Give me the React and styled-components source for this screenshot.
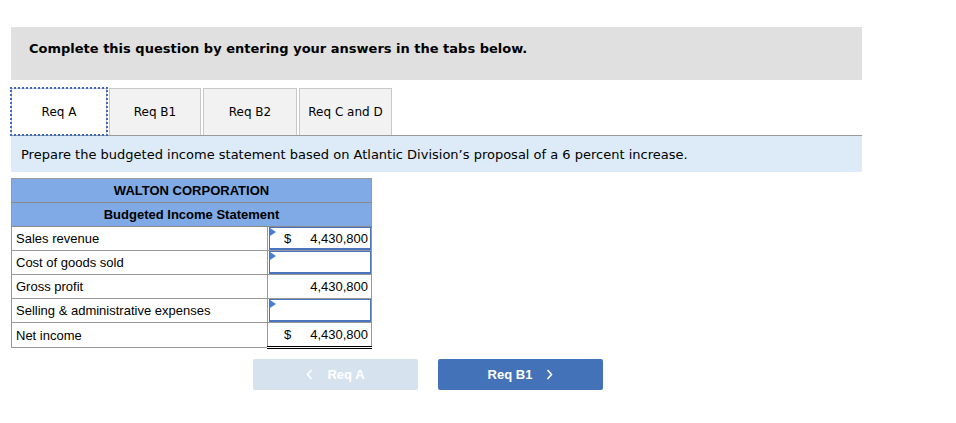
import React from "react";
import styled, { createGlobalStyle } from "styled-components";

const GlobalStyle = createGlobalStyle`
  body {
    margin: 0;
    background: #ffffff;
    font-family: "DejaVu Sans", Verdana, sans-serif;
  }
`;

const Page = styled.div`
  width: 851px;
  padding: 27px 0 0 11px;
`;

const Banner = styled.div`
  box-sizing: border-box;
  height: 53px;
  background: #e0e0e0;
  padding: 14px 0 0 18px;
  font-size: 13px;
  font-weight: bold;
  color: #000;
`;

const TabRow = styled.div`
  display: flex;
  gap: 2px;
  margin-top: 8px;
  height: 47px;
`;

const Tab = styled.div`
  box-sizing: border-box;
  width: ${(p) => p.w}px;
  height: 47px;
  display: flex;
  align-items: center;
  justify-content: center;
  font-size: 12px;
  color: #000;
  background: ${(p) => (p.active ? "#ffffff" : "#f2f2f2")};
  border: 1px solid #c8c8c8;
  border-bottom: none;
  outline: ${(p) => (p.active ? "2px dotted #3d6cc0" : "none")};
  outline-offset: -1px;
  position: relative;
  z-index: ${(p) => (p.active ? 1 : 0)};
`;

const Instruction = styled.div`
  box-sizing: border-box;
  height: 37px;
  background: #dcebf7;
  border-top: 1px solid #9a9a9a;
  display: flex;
  align-items: center;
  padding-left: 10px;
  font-size: 13px;
  color: #000;
`;

const Statement = styled.table`
  margin-top: 6px;
  width: 360px;
  table-layout: fixed;
  border-collapse: collapse;
  font-family: "Liberation Sans", Arial, sans-serif;
  font-size: 13px;
  color: #000;
  border: 1px solid #999;
`;

const HeadCell = styled.th`
  height: 23px;
  padding: 0;
  background: #7faae5;
  font-weight: bold;
  text-align: center;
  border-bottom: 1px solid #888;
`;

const Label = styled.td`
  height: 23px;
  padding: 0 0 0 4px;
  border: 1px solid #999;
  white-space: nowrap;
`;

const ValueCell = styled.td`
  padding: 0;
  border: 1px solid #999;
  border-left: 1px solid #666;
  ${(p) => p.total && "border-top: 1px solid #333; border-bottom: 3px double #000;"}
`;

const Amount = styled.div`
  box-sizing: border-box;
  position: relative;
  height: 23px;
  margin: 0 0 0 1px;
  display: flex;
  align-items: center;
  justify-content: space-between;
  padding: 0 2px 0 14px;
  border: ${(p) => (p.input ? "1px solid #4b74bf" : "1px solid transparent")};
  ${(p) => p.input && "border-bottom-width: 2px;"}
`;

const Marker = styled.span`
  position: absolute;
  top: 0;
  left: 0;
  width: 0;
  height: 0;
  border-top: 4px solid transparent;
  border-bottom: 4px solid transparent;
  border-left: 6px solid #4a7dd6;
`;

const Nav = styled.div`
  display: flex;
  gap: 20px;
  margin: 10px 0 0 242px;
`;

const NavButton = styled.div`
  width: 165px;
  height: 31px;
  border-radius: 2px;
  background: ${(p) => (p.disabled ? "#d6e3ef" : "#4472b8")};
  color: #fff;
  font-family: "Liberation Sans", Arial, sans-serif;
  font-size: 13px;
  font-weight: bold;
  display: flex;
  align-items: center;
  justify-content: center;
  gap: 14px;
`;

const Chevron = ({ dir }) => (
  <svg width="7" height="11" viewBox="0 0 7 11">
    <path
      d={dir === "left" ? "M5.5 1 L1.5 5.5 L5.5 10" : "M1.5 1 L5.5 5.5 L1.5 10"}
      fill="none"
      stroke="#fff"
      strokeWidth="1.6"
    />
  </svg>
);

const rows = [
  { label: "Sales revenue", input: true, dollar: true, value: "4,430,800" },
  { label: "Cost of goods sold", input: true },
  { label: "Gross profit", value: "4,430,800" },
  { label: "Selling & administrative expenses", input: true },
  { label: "Net income", dollar: true, value: "4,430,800", total: true },
];

export default function App() {
  return (
    <Page>
      <GlobalStyle />
      <Banner>Complete this question by entering your answers in the tabs below.</Banner>
      <TabRow>
        <Tab w={96} active>Req A</Tab>
        <Tab w={92}>Req B1</Tab>
        <Tab w={94}>Req B2</Tab>
        <Tab w={93}>Req C and D</Tab>
      </TabRow>
      <Instruction>
        Prepare the budgeted income statement based on Atlantic Division’s proposal of a 6 percent increase.
      </Instruction>
      <Statement>
        <colgroup>
          <col style={{ width: 256 }} />
          <col style={{ width: 104 }} />
        </colgroup>
        <thead>
          <tr>
            <HeadCell colSpan={2}>WALTON CORPORATION</HeadCell>
          </tr>
          <tr>
            <HeadCell colSpan={2}>Budgeted Income Statement</HeadCell>
          </tr>
        </thead>
        <tbody>
          {rows.map((r) => (
            <tr key={r.label}>
              <Label>{r.label}</Label>
              <ValueCell total={r.total}>
                <Amount input={r.input}>
                  {r.input && <Marker />}
                  <span>{r.dollar ? "$" : ""}</span>
                  <span>{r.value || ""}</span>
                </Amount>
              </ValueCell>
            </tr>
          ))}
        </tbody>
      </Statement>
      <Nav>
        <NavButton disabled>
          <Chevron dir="left" />
          <span>Req A</span>
        </NavButton>
        <NavButton>
          <span>Req B1</span>
          <Chevron dir="right" />
        </NavButton>
      </Nav>
    </Page>
  );
}
